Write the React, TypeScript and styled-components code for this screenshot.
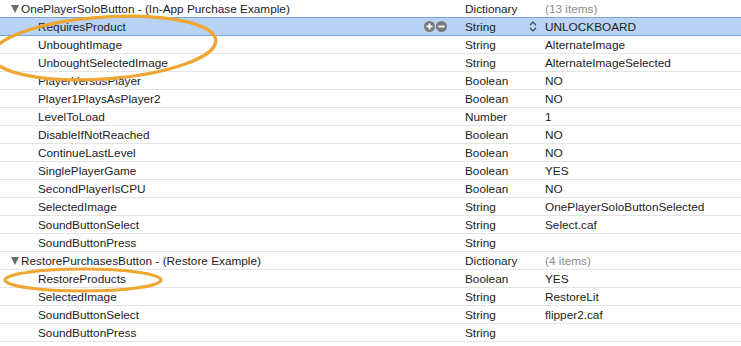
import React from 'react'
import styled, { createGlobalStyle } from 'styled-components'

const Global = createGlobalStyle`
  body {
    margin: 0;
    background: #fff;
    font-family: "Helvetica Neue", "Liberation Sans", Arial, sans-serif;
    -webkit-font-smoothing: antialiased;
  }
`

const Editor = styled.div`
  position: relative;
  width: 741px;
  height: 346px;
  overflow: hidden;
  background: #fff;
`

const Row = styled.div<{ $selected?: boolean }>`
  display: grid;
  grid-template-columns: 465px 80px 1fr;
  align-items: center;
  height: 17px;
  border-bottom: 1px solid ${p => (p.$selected ? '#7da4d6' : '#e4e4e4')};
  border-top: ${p => (p.$selected ? '1px solid #7da4d6' : 'none')};
  margin-top: ${p => (p.$selected ? '-1px' : '0')};
  background: ${p => (p.$selected ? '#b8d3f5' : '#fff')};
  font-size: 11.8px;
  color: #1c1c1c;
  white-space: nowrap;
`

const KeyCell = styled.div<{ $child?: boolean }>`
  display: flex;
  align-items: center;
  padding-left: ${p => (p.$child ? '38px' : '11px')};
  padding-right: 18px;
`

const KeyText = styled.span`
  flex: 1;
`

const Disclosure = styled.span`
  display: inline-block;
  width: 0;
  height: 0;
  border-left: 4.5px solid transparent;
  border-right: 4.5px solid transparent;
  border-top: 8px solid #6b6b6b;
  margin-right: 2px;
`

const RowButtons = styled.div`
  display: flex;
  gap: 1px;
`

const TypeCell = styled.div`
  display: flex;
  align-items: center;
  justify-content: space-between;
  padding-right: 8px;
`

const ValueCell = styled.div<{ $muted?: boolean }>`
  color: ${p => (p.$muted ? '#8c8c8c' : '#1c1c1c')};
`

const Annotations = styled.svg`
  position: absolute;
  left: 0;
  top: 0;
  pointer-events: none;
`

const Circle = ({ minus }: { minus?: boolean }) => (
  <svg width="11" height="11" viewBox="0 0 11 11">
    <circle cx="5.5" cy="5.5" r="5.5" fill="#7a7a7a" />
    <rect x="2.5" y="4.6" width="6" height="1.8" fill="#fff" />
    {!minus && <rect x="4.6" y="2.5" width="1.8" height="6" fill="#fff" />}
  </svg>
)

const Stepper = () => (
  <svg width="8" height="11" viewBox="0 0 8 11">
    <path d="M1 4 L4 1 L7 4" fill="none" stroke="#444" strokeWidth="1.2" />
    <path d="M1 7 L4 10 L7 7" fill="none" stroke="#444" strokeWidth="1.2" />
  </svg>
)

type Item = { key: string; type: string; value: string; parent?: boolean; selected?: boolean; muted?: boolean }

const items: Item[] = [
  { key: 'OnePlayerSoloButton - (In-App Purchase Example)', type: 'Dictionary', value: '(13 items)', parent: true, muted: true },
  { key: 'RequiresProduct', type: 'String', value: 'UNLOCKBOARD', selected: true },
  { key: 'UnboughtImage', type: 'String', value: 'AlternateImage' },
  { key: 'UnboughtSelectedImage', type: 'String', value: 'AlternateImageSelected' },
  { key: 'PlayerVersusPlayer', type: 'Boolean', value: 'NO' },
  { key: 'Player1PlaysAsPlayer2', type: 'Boolean', value: 'NO' },
  { key: 'LevelToLoad', type: 'Number', value: '1' },
  { key: 'DisableIfNotReached', type: 'Boolean', value: 'NO' },
  { key: 'ContinueLastLevel', type: 'Boolean', value: 'NO' },
  { key: 'SinglePlayerGame', type: 'Boolean', value: 'YES' },
  { key: 'SecondPlayerIsCPU', type: 'Boolean', value: 'NO' },
  { key: 'SelectedImage', type: 'String', value: 'OnePlayerSoloButtonSelected' },
  { key: 'SoundButtonSelect', type: 'String', value: 'Select.caf' },
  { key: 'SoundButtonPress', type: 'String', value: '' },
  { key: 'RestorePurchasesButton - (Restore Example)', type: 'Dictionary', value: '(4 items)', parent: true, muted: true },
  { key: 'RestoreProducts', type: 'Boolean', value: 'YES' },
  { key: 'SelectedImage', type: 'String', value: 'RestoreLit' },
  { key: 'SoundButtonSelect', type: 'String', value: 'flipper2.caf' },
  { key: 'SoundButtonPress', type: 'String', value: '' },
]

export default function App() {
  return (
    <Editor>
      <Global />
      {items.map((it, i) => (
        <Row key={i} $selected={it.selected}>
          <KeyCell $child={!it.parent}>
            {it.parent && <Disclosure />}
            <KeyText>{it.key}</KeyText>
            {it.selected && (
              <RowButtons>
                <Circle />
                <Circle minus />
              </RowButtons>
            )}
          </KeyCell>
          <TypeCell>
            <span>{it.type}</span>
            {it.selected && <Stepper />}
          </TypeCell>
          <ValueCell $muted={it.muted}>{it.value}</ValueCell>
        </Row>
      ))}
      <Annotations width="741" height="346" viewBox="0 0 741 346">
        <ellipse cx="104" cy="48" rx="112" ry="31" transform="rotate(-4 104 48)" fill="none" stroke="#efa632" strokeWidth="3.2" />
        <ellipse cx="83" cy="280" rx="78" ry="11" fill="none" stroke="#efa632" strokeWidth="3.2" />
      </Annotations>
    </Editor>
  )
}
